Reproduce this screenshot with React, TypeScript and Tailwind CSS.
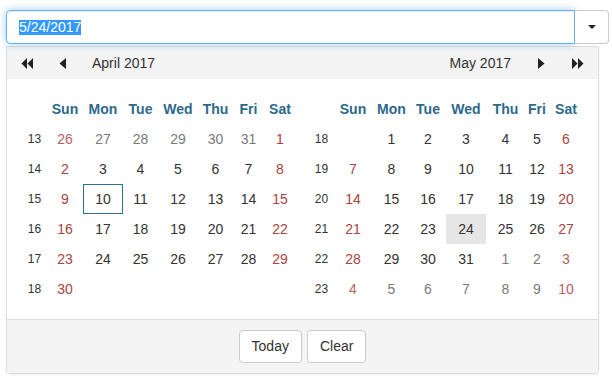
type Cell = { d: number; other: boolean } | null;
type Week = { n: number; days: Cell[] };

const dayNames = ['Sun', 'Mon', 'Tue', 'Wed', 'Thu', 'Fri', 'Sat'];

// builds 6 rows of a month grid
function buildMonth(
  firstDow: number,
  days: number,
  prevDays: number,
  firstWeek: number,
  leadPrev: boolean,
  trailNext: boolean
): Week[] {
  const cells: Cell[] = [];
  for (let i = 0; i < firstDow; i++) {
    cells.push(leadPrev ? { d: prevDays - firstDow + 1 + i, other: true } : null);
  }
  for (let d = 1; d <= days; d++) cells.push({ d, other: false });
  let next = 1;
  while (cells.length < 42) {
    cells.push(trailNext ? { d: next++, other: true } : null);
  }
  const weeks: Week[] = [];
  for (let w = 0; w < 6; w++) {
    weeks.push({ n: firstWeek + w, days: cells.slice(w * 7, w * 7 + 7) });
  }
  return weeks;
}

const april = buildMonth(6, 30, 31, 13, true, false);
const may = buildMonth(1, 31, 30, 18, false, true);

function dayColor(cell: NonNullable<Cell>, col: number) {
  const weekend = col === 0 || col === 6;
  if (cell.other) return weekend ? 'text-[#b4625f]' : 'text-[#7a7a7a]';
  return weekend ? 'text-[#a94442]' : 'text-[#333]';
}

function Month({
  weeks,
  gridClass,
  boxed,
  selected,
}: {
  weeks: Week[];
  gridClass: string;
  boxed?: number;
  selected?: number;
}) {
  return (
    <div className={`grid auto-rows-[30px] ${gridClass}`}>
      <div />
      {dayNames.map((n) => (
        <div key={n} className="flex items-center justify-center font-bold text-[14px] text-[#2c6a8b]">
          {n}
        </div>
      ))}
      {weeks.map((w) => (
        <div key={w.n} className="contents">
          <div className="flex items-center justify-center text-[12px] text-[#333]">{w.n}</div>
          {w.days.map((cell, i) => {
            if (!cell) return <div key={i} />;
            const isBoxed = !cell.other && cell.d === boxed;
            const isSel = !cell.other && cell.d === selected;
            return (
              <div
                key={i}
                className={clsxLite(
                  'flex items-center justify-center text-[14px]',
                  dayColor(cell, i),
                  isBoxed && 'border border-[#2f6f8f]',
                  isSel && 'bg-[#e6e6e6]'
                )}
              >
                {cell.d}
              </div>
            );
          })}
        </div>
      ))}
    </div>
  );
}

function clsxLite(...parts: (string | false | undefined)[]) {
  return parts.filter(Boolean).join(' ');
}

function FastLeft() {
  return (
    <svg width="12" height="11" viewBox="0 0 12 11">
      <path d="M6 0 L0.5 5.5 L6 11 Z M12 0 L6.5 5.5 L12 11 Z" fill="#222" />
    </svg>
  );
}

function FastRight() {
  return (
    <svg width="12" height="11" viewBox="0 0 12 11">
      <path d="M0 0 L5.5 5.5 L0 11 Z M6 0 L11.5 5.5 L6 11 Z" fill="#222" />
    </svg>
  );
}

function Left() {
  return (
    <svg width="7" height="11" viewBox="0 0 7 11">
      <path d="M7 0 L0.5 5.5 L7 11 Z" fill="#222" />
    </svg>
  );
}

function Right() {
  return (
    <svg width="7" height="11" viewBox="0 0 7 11">
      <path d="M0 0 L6.5 5.5 L0 11 Z" fill="#222" />
    </svg>
  );
}

export default function App() {
  return (
    <div className="min-h-[383px] bg-white pl-[6px] pt-[10px] font-['Liberation_Sans',Arial,sans-serif] text-[#333]">
      <div className="flex h-[34px] w-[603px]">
        <div className="flex flex-1 items-center rounded-l-[4px] border border-[#66afe9] pl-[12px] shadow-[inset_0_1px_1px_rgba(0,0,0,0.075),0_0_8px_rgba(102,175,233,0.6)]">
          <span className="inline-block bg-[#3399ff] text-[14px] leading-[15px] text-white">5/24/2017</span>
        </div>
        <div className="flex w-[34px] items-center justify-center rounded-r-[4px] border border-l-0 border-[#ccc] bg-white">
          <svg width="8" height="4" viewBox="0 0 8 4">
            <path d="M0 0 L8 0 L4 4 Z" fill="#222" />
          </svg>
        </div>
      </div>

      <div className="mt-[2px] w-[593px] overflow-hidden rounded-b-[4px] border border-[#ddd] shadow-[0_1px_2px_rgba(0,0,0,0.08)]">
        <div className="flex h-[32px] items-center bg-[#f4f4f4] pr-[14px] text-[14px]">
          <span className="ml-[14px]">
            <FastLeft />
          </span>
          <span className="ml-[26px]">
            <Left />
          </span>
          <span className="ml-[26px]">April 2017</span>
          <span className="flex-1" />
          <span>May 2017</span>
          <span className="ml-[27px]">
            <Right />
          </span>
          <span className="ml-[27px]">
            <FastRight />
          </span>
        </div>

        <div className="flex gap-[14px] bg-white px-[15px] py-[15px]">
          <Month weeks={april} gridClass="grid-cols-[25px_36px_40px_35px_40px_35px_31px_32px]" boxed={10} />
          <Month weeks={may} gridClass="grid-cols-[23px_40px_37px_36px_40px_39px_24px_34px]" selected={24} />
        </div>

        <div className="flex justify-center gap-[5px] border-t border-[#ddd] bg-[#f4f4f4] py-[10px]">
          <button className="h-[33px] rounded-[4px] border border-[#ccc] bg-white px-[12px] text-[14px] text-[#333]">
            Today
          </button>
          <button className="h-[33px] rounded-[4px] border border-[#ccc] bg-white px-[12px] text-[14px] text-[#333]">
            Clear
          </button>
        </div>
      </div>
    </div>
  );
}
